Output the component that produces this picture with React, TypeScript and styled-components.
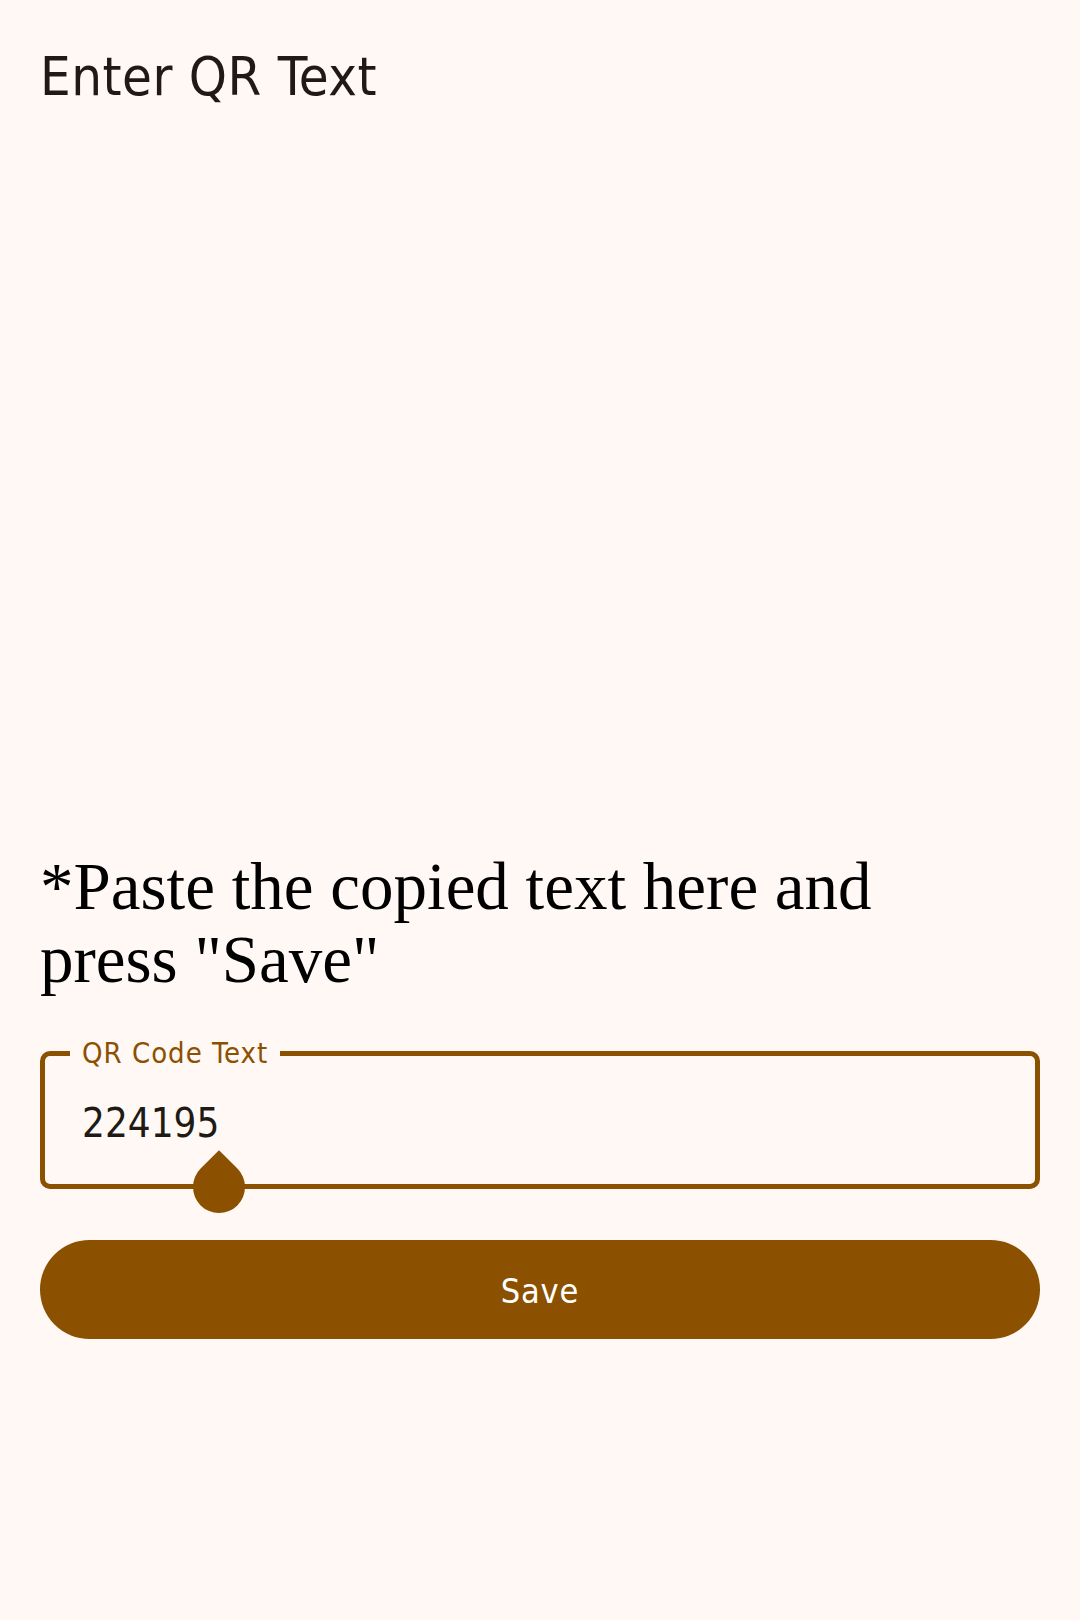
import styled, { createGlobalStyle } from 'styled-components'

const Global = createGlobalStyle`
  body {
    margin: 0;
    background: #fff8f5;
    font-family: "DejaVu Sans Condensed", "DejaVu Sans", sans-serif;
  }
`

const Page = styled.div`
  display: flex;
  flex-direction: column;
  padding: 45px 40px 0;
  min-height: 1620px;
  box-sizing: border-box;
`

const Title = styled.h1`
  margin: 0;
  font-size: 54px;
  line-height: 64px;
  letter-spacing: 0.5px;
  font-weight: normal;
  color: #201a17;
`

// area where the scanned code preview would sit
const Preview = styled.div`
  height: 741px;
`

const Hint = styled.p`
  margin: 0;
  max-width: 960px;
  font-family: "Liberation Serif", serif;
  font-size: 67px;
  line-height: 73px;
  color: #000;
`

const Field = styled.div`
  position: relative;
  margin-top: 40px;
`

const Outline = styled.fieldset`
  margin: 0;
  padding: 28px 40px 37px 37px;
  border: 5px solid #8b5000;
  border-radius: 10px;
`

const Label = styled.legend`
  margin-left: -12px;
  padding: 0 12px;
  font-size: 29px;
  line-height: 1.2;
  letter-spacing: 1px;
  color: #8b5000;
`

const Input = styled.input`
  display: block;
  width: 100%;
  padding: 0;
  border: none;
  outline: none;
  background: transparent;
  font-family: inherit;
  font-size: 40px;
  line-height: 48px;
  height: 48px;
  color: #201a17;
`

const Handle = styled.span`
  position: absolute;
  left: 153px;
  bottom: -24px;
  width: 52px;
  height: 52px;
  background: #8b5000;
  border-radius: 0 50% 50% 50%;
  transform: rotate(45deg);
`

const SaveButton = styled.button`
  margin-top: 51px;
  height: 99px;
  border: none;
  border-radius: 50px;
  background: #8b5000;
  color: #ffffff;
  font-family: inherit;
  font-size: 34px;
  letter-spacing: 0.8px;
  padding-top: 5px;
  cursor: pointer;
`

export default function App() {
  return (
    <>
      <Global />
      <Page>
        <Title>Enter QR Text</Title>
        <Preview />
        <Hint>*Paste the copied text here and press "Save"</Hint>
        <Field>
          <Outline>
            <Label>QR Code Text</Label>
            <Input defaultValue="224195" readOnly />
          </Outline>
          <Handle />
        </Field>
        <SaveButton>Save</SaveButton>
      </Page>
    </>
  )
}
